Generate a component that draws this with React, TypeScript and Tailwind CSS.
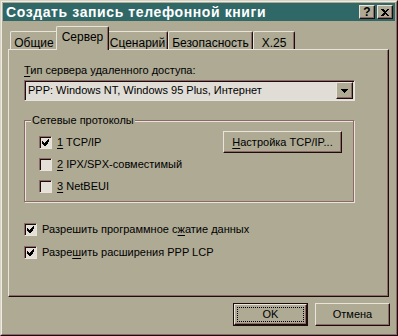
import React from "react";

const face = "bg-[#aeaa94]";

// raised 3d edge used by buttons and tabs
const raised =
  "border border-t-[#e8e4dc] border-l-[#e8e4dc] border-r-[#1c0c0c] border-b-[#1c0c0c] shadow-[inset_-1px_-1px_0_#8c6868]";

// sunken edge for fields and check boxes
const sunken =
  "border border-t-[#8c6868] border-l-[#8c6868] border-r-[#e8e4dc] border-b-[#e8e4dc] shadow-[inset_1px_1px_0_#1c0c0c]";

const U = ({ children }: { children: React.ReactNode }) => <span className="underline underline-offset-2">{children}</span>;

const Check = ({ checked }: { checked?: boolean }) => (
  <div className={`w-[13px] h-[13px] shrink-0 bg-[#e4e0d8] ${sunken} flex items-center justify-center`}>
    {checked && (
      <svg width="7" height="7" viewBox="0 0 7 7" shapeRendering="crispEdges">
        <path d="M6 0h1v3h-1zM5 1h1v4h-1zM4 2h1v4h-1zM3 3h1v4h-1zM2 4h1v3h-1zM1 3h1v3h-1zM0 2h1v3h-1z" fill="#000" />
      </svg>
    )}
  </div>
);

const tabs = [
  { label: "Общие", w: "w-[48px]" },
  { label: "Сервер", w: "w-[47px]", active: true },
  { label: "Сценарий", w: "w-[61px]" },
  { label: "Безопасность", w: "w-[85px]" },
  { label: "X.25", w: "w-[42px]" },
];

export default function App() {
  return (
    <div
      className={`w-[398px] h-[336px] ${face} text-black text-[11px] leading-[13px] border border-t-[#d8d4c4] border-l-[#d8d4c4] border-r-[#1c0c0c] border-b-[#1c0c0c] flex flex-col`}
      style={{ fontFamily: '"Liberation Sans", Arial, sans-serif' }}
    >
      <div className="flex-1 flex flex-col border border-t-[#f0ece4] border-l-[#f0ece4] border-r-[#8c6868] border-b-[#8c6868] p-px">
        {/* title bar */}
        <div className="h-[18px] bg-[#306868] flex items-center pl-[3px] pr-[2px]">
          <span className="text-white font-bold text-[14px] leading-[18px] tracking-[0.6px] flex-1">Создать запись телефонной книги</span>
          <div className={`w-[16px] h-[14px] ${face} ${raised} flex items-center justify-center font-bold text-[12px] leading-none`}>?</div>
          <div className={`w-[16px] h-[14px] ml-[2px] ${face} ${raised} flex items-center justify-center`}>
            <svg width="8" height="7" viewBox="0 0 8 7" shapeRendering="crispEdges">
              <path d="M0 0h2l2 2 2-2h2l-3 3.5 3 3.5h-2l-2-2-2 2h-2l3-3.5z" fill="#000" />
            </svg>
          </div>
        </div>

        {/* tabs */}
        <div className="mt-[8px] ml-[5px] flex items-end h-[20px] pl-[2px]">
          {tabs.map((t) =>
            t.active ? (
              <div
                key={t.label}
                className={`${t.w} -mx-[2px] px-[2px] box-content h-[20px] relative z-10 ${face} border-l border-t border-r border-t-[#e8e4dc] border-l-[#e8e4dc] border-r-[#1c0c0c] rounded-t-[2px] shadow-[inset_-1px_0_0_#8c6868] -mb-px flex justify-center pt-[3px]`}
              >
                <span className="text-[12px] leading-[14px]">{t.label}</span>
              </div>
            ) : (
              <div
                key={t.label}
                className={`${t.w} h-[18px] border-l border-t border-r border-t-[#e8e4dc] border-l-[#e8e4dc] border-r-[#1c0c0c] rounded-t-[2px] shadow-[inset_-1px_0_0_#8c6868] flex justify-center pt-[4px]`}
              >
                <span className="text-[12px] leading-[14px]">{t.label}</span>
              </div>
            )
          )}
        </div>

        {/* tab panel */}
        <div className={`ml-[5px] w-[381px] h-[248px] ${raised} pl-[15px] pt-[14px]`}>
          <div>
            <U>Т</U>ип сервера удаленного доступа:
          </div>
          <div className={`mt-[3px] w-[331px] h-[21px] bg-[#e0ddd6] ${sunken} flex items-center pl-[3px] pr-px`}>
            <span className="flex-1">PPP: Windows NT, Windows 95 Plus, Интернет</span>
            <div className={`w-[17px] h-[17px] ${face} ${raised} flex items-center justify-center`}>
              <svg width="7" height="4" viewBox="0 0 7 4" shapeRendering="crispEdges">
                <path d="M0 0h7v1h-1v1h-1v1h-1v1h-1v-1h-1v-1h-1v-1h-1z" fill="#000" />
              </svg>
            </div>
          </div>

          {/* group box */}
          <div className="mt-[19px] w-[330px] h-[82px] border border-[#8c6868] shadow-[inset_1px_1px_0_#e8e4dc,1px_1px_0_#e8e4dc] flex flex-col">
            <span className={`-mt-[7px] ml-[6px] px-px w-fit ${face}`}>Сетевые протоколы</span>
            <div className="mt-[4px] h-[22px] flex items-center pl-[14px] pr-[11px]">
              <Check checked />
              <span className="ml-[5px] flex-1">
                <U>1</U> TCP/IP
              </span>
              <div className={`w-[119px] h-[22px] ${raised} flex items-center justify-center`}>
                <span>
                  <U>Н</U>астройка TCP/IP...
                </span>
              </div>
            </div>
            <div className="mt-[5px] h-[13px] flex items-center pl-[14px]">
              <Check />
              <span className="ml-[5px]">
                <U>2</U> IPX/SPX-совместимый
              </span>
            </div>
            <div className="mt-[9px] h-[13px] flex items-center pl-[14px]">
              <Check />
              <span className="ml-[5px]">
                <U>3</U> NetBEUI
              </span>
            </div>
          </div>

          <div className="mt-[21px] h-[13px] flex items-center">
            <Check checked />
            <span className="ml-[5px]">
              Разрешить программное с<U>ж</U>атие данных
            </span>
          </div>
          <div className="mt-[10px] h-[13px] flex items-center">
            <Check checked />
            <span className="ml-[5px]">
              Разре<U>ш</U>ить расширения PPP LCP
            </span>
          </div>
        </div>

        {/* buttons */}
        <div className="mt-[6px] flex justify-end gap-[7px] pr-[5px]">
          <div className="w-[75px] h-[23px] border border-[#1c0c0c]">
            <div className={`h-full ${raised} flex items-center justify-center p-[2px]`}>
              <div className="w-full h-full border border-dotted border-black flex items-center justify-center">OK</div>
            </div>
          </div>
          <div className={`w-[75px] h-[23px] ${raised} flex items-center justify-center`}>Отмена</div>
        </div>
      </div>
    </div>
  );
}
